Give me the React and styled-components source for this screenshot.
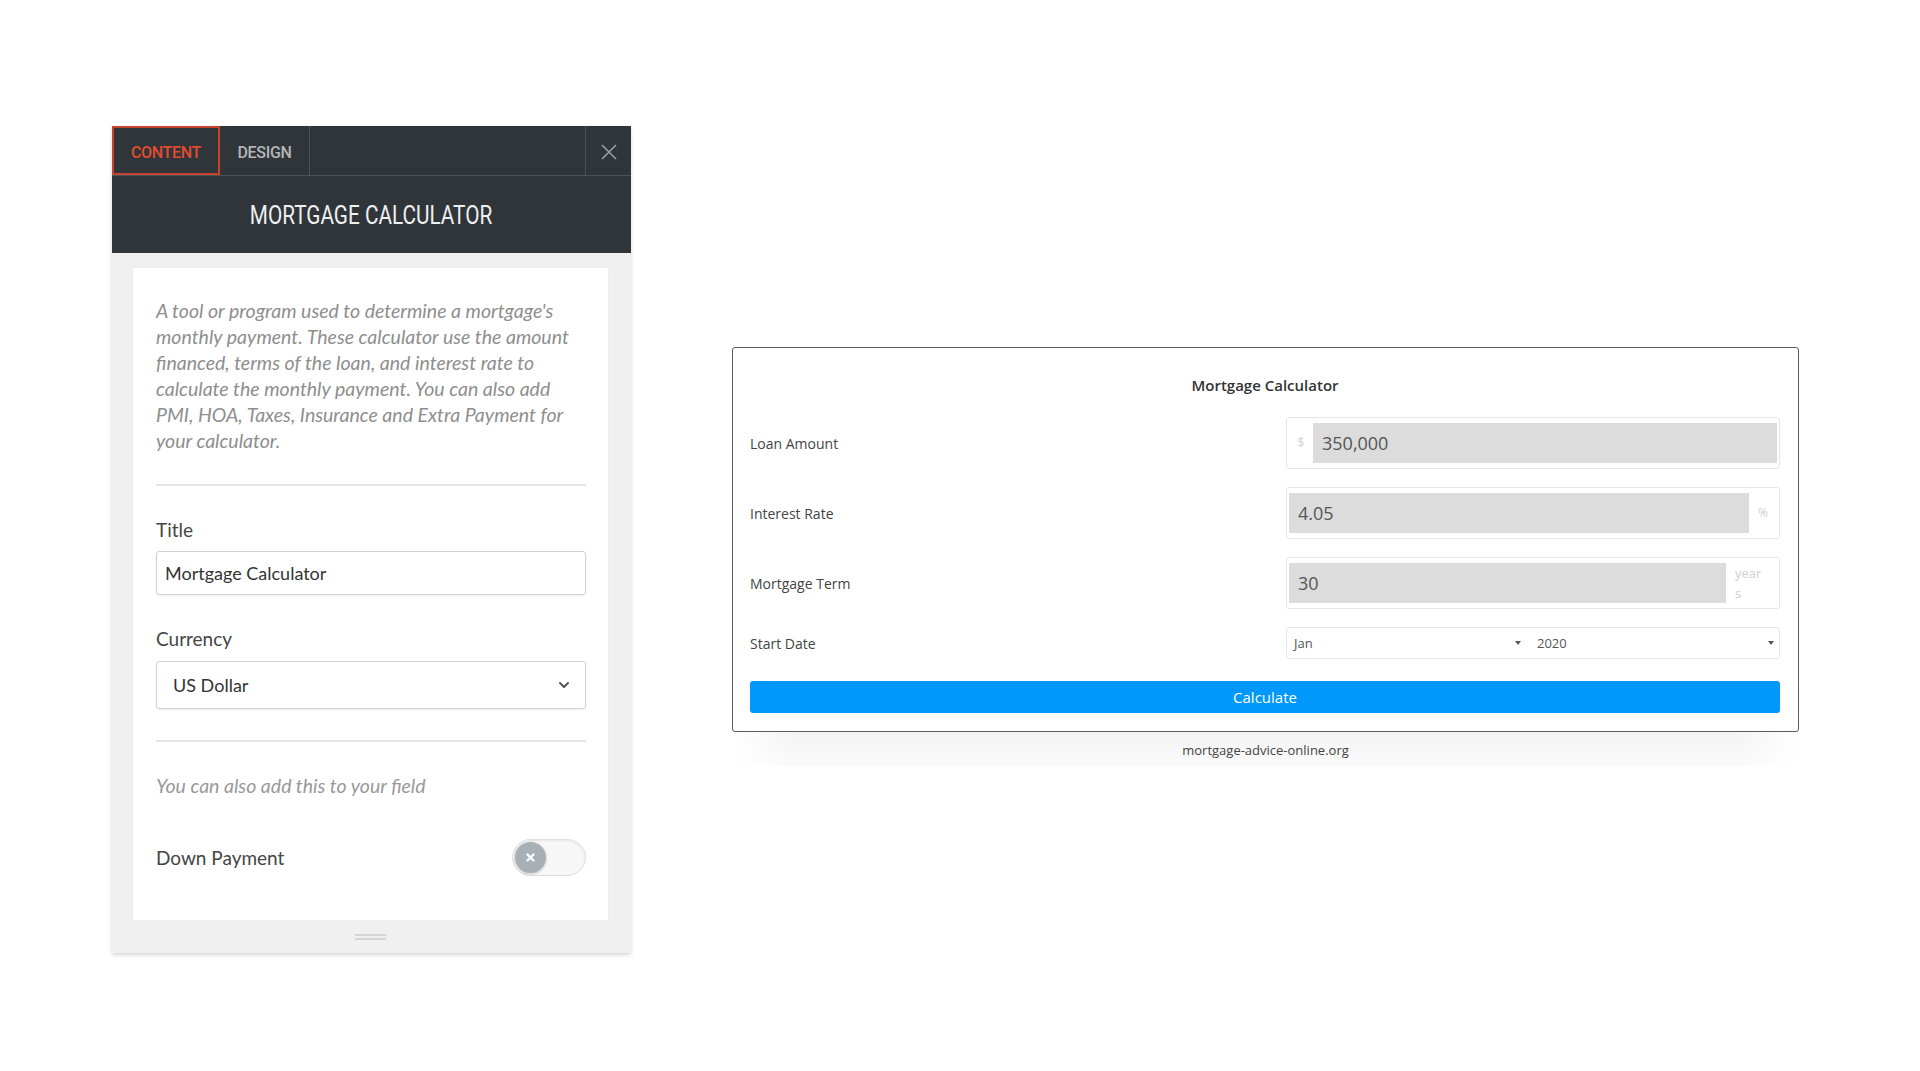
import React from 'react';
import styled, { createGlobalStyle } from 'styled-components';

const Global = createGlobalStyle`
  html, body { margin: 0; padding: 0; background: #fff; }
  body { font-family: "Open Sans", "Liberation Sans", sans-serif; }
  * { box-sizing: border-box; }
`;

const Page = styled.div`
  width: 1920px;
  height: 1071px;
  overflow: hidden;
  display: flex;
  align-items: flex-start;
  padding: 126px 0 0 112px;
`;

/* ---------- Left editor panel ---------- */
const Panel = styled.div`
  width: 519px;
  background: #f0f0f0;
  box-shadow: 0 2px 4px rgba(0, 0, 0, 0.16);
  display: flex;
  flex-direction: column;
`;

const TabBar = styled.div`
  height: 50px;
  background: #30353a;
  display: flex;
  border-bottom: 1px solid #4d5257;
`;

const Tab = styled.div`
  width: ${p => p.w}px;
  display: flex;
  align-items: center;
  justify-content: center;
  padding-top: 3px;
  font-family: Roboto, "Liberation Sans", sans-serif;
  font-size: 16px;
  font-weight: 500;
  letter-spacing: -0.3px;
  color: ${p => (p.active ? '#e24b2f' : '#b3b6b9')};
  border: ${p => (p.active ? '2px solid #c4442e' : 'none')};
  border-right: ${p => (p.active ? '2px solid #c4442e' : '1px solid #4d5257')};
`;

const TabSpacer = styled.div`
  flex: 1;
`;

const CloseBtn = styled.div`
  width: 46px;
  border-left: 1px solid #4d5257;
  display: flex;
  align-items: center;
  justify-content: center;
  padding-top: 2px;
`;

const Header = styled.div`
  height: 77px;
  background: #30353a;
  display: flex;
  align-items: center;
  justify-content: center;
`;

const HeaderTitle = styled.span`
  display: inline-block;
  font-family: Roboto, "Liberation Sans", sans-serif;
  font-size: 25px;
  color: #eef0f1;
  transform: scaleX(0.83);
  margin-top: 2px;
`;

const Body = styled.div`
  padding: 15px 23px 0 21px;
  display: flex;
  flex-direction: column;
`;

const Card = styled.div`
  background: #fff;
  padding: 30px 22px 44px 23px;
  display: flex;
  flex-direction: column;
  box-shadow: 0 0 2px rgba(0, 0, 0, 0.05);
`;

const Description = styled.p`
  margin: 0;
  font-family: Lato, "Open Sans", sans-serif;
  font-style: italic;
  font-size: 19.5px;
  line-height: 26px;
  color: #8e8e8e;
  white-space: nowrap;
`;

const Divider = styled.hr`
  margin: ${p => p.mt}px 0 0 0;
  border: none;
  border-top: 2px solid #e4e4e4;
  height: 0;
`;

const FieldLabel = styled.div`
  margin-top: ${p => p.mt}px;
  font-family: Lato, "Open Sans", sans-serif;
  font-size: 19px;
  line-height: 24px;
  color: #454545;
`;

const TextInput = styled.div`
  margin-top: ${p => p.mt}px;
  height: ${p => p.h}px;
  border: 1px solid #d2d2d2;
  border-radius: 3px;
  box-shadow: 0 1px 2px rgba(0, 0, 0, 0.08);
  display: flex;
  align-items: center;
  justify-content: space-between;
  padding: 0 ${p => p.pr || 10}px 0 ${p => p.pl}px;
  font-family: Lato, "Open Sans", sans-serif;
  font-size: 18px;
  color: #333;
`;

const Note = styled.div`
  margin-top: 32px;
  font-family: Lato, "Open Sans", sans-serif;
  font-style: italic;
  font-size: 19.5px;
  line-height: 24px;
  color: #999;
`;

const ToggleRow = styled.div`
  margin-top: 41px;
  display: flex;
  align-items: center;
  justify-content: space-between;
  height: 37px;
`;

const Track = styled.div`
  width: 74px;
  height: 37px;
  border-radius: 19px;
  background: #f7f7f7;
  border: 1px solid #e0e0e0;
  box-shadow: inset 0 1px 3px rgba(0, 0, 0, 0.08);
  display: flex;
  align-items: center;
  padding: 0 2px;
`;

const Knob = styled.div`
  width: 31px;
  height: 31px;
  border-radius: 50%;
  background: #a9b0b5;
  box-shadow: 0 1px 3px rgba(0, 0, 0, 0.2);
  display: flex;
  align-items: center;
  justify-content: center;
`;

const HandleArea = styled.div`
  height: 33px;
  display: flex;
  align-items: center;
  justify-content: center;
`;

const Handle = styled.div`
  width: 31px;
  height: 6px;
  border-top: 2px solid #d4d4d4;
  border-bottom: 2px solid #d4d4d4;
`;

/* ---------- Right calculator preview ---------- */
const RightCol = styled.div`
  margin-left: 101px;
  margin-top: 221px;
  width: 1067px;
  display: flex;
  flex-direction: column;
`;

const Calc = styled.div`
  border: 1px solid #5a5a5a;
  border-radius: 3px;
  padding: 26px 18px 18px 17px;
  display: flex;
  flex-direction: column;
  background: #fff;
`;

const CalcTitle = styled.div`
  text-align: center;
  font-size: 15px;
  font-weight: 600;
  line-height: 22px;
  color: #333;
`;

const Rows = styled.div`
  margin-top: 21px;
  display: grid;
  grid-template-columns: 1fr 494px;
  row-gap: 18px;
  align-items: center;
`;

const RowLabel = styled.div`
  font-size: 14px;
  color: #444;
`;

const InputBox = styled.div`
  height: 52px;
  border: 1px solid #e6e6e6;
  border-radius: 3px;
  padding: 5px 2px 5px 2px;
  display: flex;
  align-items: stretch;
`;

const Addon = styled.div`
  width: ${p => p.w}px;
  display: flex;
  align-items: center;
  justify-content: ${p => (p.left ? 'flex-start' : 'center')};
  font-size: ${p => p.fs || 13}px;
  line-height: 20px;
  color: #d0d0d0;
  padding-left: ${p => p.pl || 0}px;
`;

const AddonWrap = styled.span`
  display: block;
  width: 31px;
  word-break: break-all;
`;

const GrayField = styled.div`
  flex: 1;
  background: #dcdcdc;
  display: flex;
  align-items: center;
  padding-left: 9px;
  font-size: 18px;
  color: #555;
`;

const DateBox = styled.div`
  height: 32px;
  border: 1px solid #e6e6e6;
  border-radius: 3px;
  display: grid;
  grid-template-columns: 1fr 1fr;
`;

const DateSelect = styled.div`
  display: flex;
  align-items: center;
  justify-content: space-between;
  padding: 0 ${p => p.pr}px 0 ${p => p.pl}px;
  font-size: 13px;
  color: #555;
`;

const Caret = styled.span`
  width: 0;
  height: 0;
  border-left: 3px solid transparent;
  border-right: 3px solid transparent;
  border-top: 4px solid #555;
`;

const CalcButton = styled.div`
  margin-top: 22px;
  height: 32px;
  background: #0098fb;
  border-radius: 3px;
  color: #fff;
  font-size: 15px;
  display: flex;
  align-items: center;
  justify-content: center;
`;

const Footer = styled.div`
  height: 34px;
  background: linear-gradient(to right, rgba(255,255,255,0) 0%, #f3f3f3 6%, #f3f3f3 94%, rgba(255,255,255,0) 100%);
  font-size: 13px;
  color: #444;
`;

const FooterInner = styled.div`
  width: 100%;
  height: 100%;
  display: flex;
  align-items: center;
  justify-content: center;
  padding-top: 2px;
  background: linear-gradient(to bottom, rgba(255,255,255,0) 0%, rgba(255,255,255,0.6) 100%);
`;

const CloseIcon = () => (
  <svg width="18" height="18" viewBox="0 0 18 18" fill="none">
    <path d="M2 2L16 16M16 2L2 16" stroke="#9b9fa3" strokeWidth="1.6" />
  </svg>
);

const Chevron = () => (
  <svg width="12" height="8" viewBox="0 0 12 8" fill="none">
    <path d="M2 2L6 6L10 2" stroke="#555" strokeWidth="2" strokeLinecap="round" strokeLinejoin="round" />
  </svg>
);

const SmallX = () => (
  <svg width="11" height="11" viewBox="0 0 11 11" fill="none">
    <path d="M2.5 2.5L8.5 8.5M8.5 2.5L2.5 8.5" stroke="#fff" strokeWidth="2.4" strokeLinecap="round" />
  </svg>
);

export default function App() {
  return (
    <>
      <Global />
      <Page>
        <Panel>
          <TabBar>
            <Tab w={108} active>CONTENT</Tab>
            <Tab w={90}>DESIGN</Tab>
            <TabSpacer />
            <CloseBtn><CloseIcon /></CloseBtn>
          </TabBar>
          <Header>
            <HeaderTitle>MORTGAGE CALCULATOR</HeaderTitle>
          </Header>
          <Body>
            <Card>
              <Description>
                A tool or program used to determine a mortgage's<br />
                monthly payment. These calculator use the amount<br />
                financed, terms of the loan, and interest rate to<br />
                calculate the monthly payment. You can also add<br />
                PMI, HOA, Taxes, Insurance and Extra Payment for<br />
                your calculator.
              </Description>
              <Divider mt={30} />
              <FieldLabel mt={32}>Title</FieldLabel>
              <TextInput mt={9} h={44} pl={8}>Mortgage Calculator</TextInput>
              <FieldLabel mt={32}>Currency</FieldLabel>
              <TextInput mt={10} h={48} pl={16} pr={15}>
                <span>US Dollar</span>
                <Chevron />
              </TextInput>
              <Divider mt={31} />
              <Note>You can also add this to your field</Note>
              <ToggleRow>
                <FieldLabel mt={0}>Down Payment</FieldLabel>
                <Track>
                  <Knob><SmallX /></Knob>
                </Track>
              </ToggleRow>
            </Card>
            <HandleArea><Handle /></HandleArea>
          </Body>
        </Panel>

        <RightCol>
          <Calc>
            <CalcTitle>Mortgage Calculator</CalcTitle>
            <Rows>
              <RowLabel>Loan Amount</RowLabel>
              <InputBox>
                <Addon w={24} fs={12}>$</Addon>
                <GrayField>350,000</GrayField>
              </InputBox>

              <RowLabel>Interest Rate</RowLabel>
              <InputBox>
                <GrayField>4.05</GrayField>
                <Addon w={28} fs={12}>%</Addon>
              </InputBox>

              <RowLabel>Mortgage Term</RowLabel>
              <InputBox>
                <GrayField>30</GrayField>
                <Addon w={51} pl={9} left><AddonWrap>years</AddonWrap></Addon>
              </InputBox>

              <RowLabel>Start Date</RowLabel>
              <DateBox>
                <DateSelect pl={7} pr={12}>
                  <span>Jan</span>
                  <Caret />
                </DateSelect>
                <DateSelect pl={4} pr={5}>
                  <span>2020</span>
                  <Caret />
                </DateSelect>
              </DateBox>
            </Rows>
            <CalcButton>Calculate</CalcButton>
          </Calc>
          <Footer>
            <FooterInner>mortgage-advice-online.org</FooterInner>
          </Footer>
        </RightCol>
      </Page>
    </>
  );
}
